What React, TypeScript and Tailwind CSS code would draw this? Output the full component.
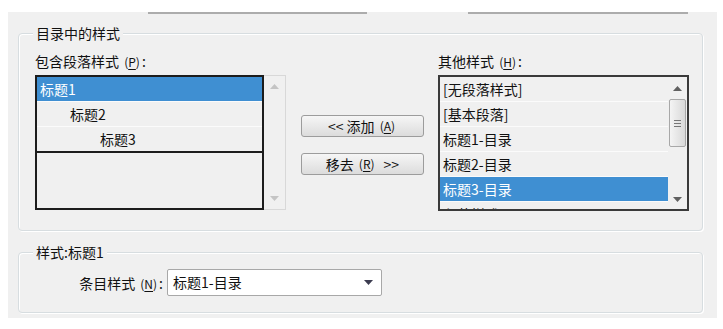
import React from "react";

const FONT = { fontFamily: '"Noto Sans CJK SC", "Noto Sans", sans-serif' };

function Key({ k }: { k: string }) {
  return (
    <span className="text-[12px] mx-[2px]">
      (<span className="underline underline-offset-2">{k}</span>)
    </span>
  );
}

function Arrow({ dir, color }: { dir: "up" | "down"; color: string }) {
  return (
    <svg width="9" height="5" viewBox="0 0 9 5">
      {dir === "up" ? (
        <path d="M4.5 0 L9 5 L0 5 Z" fill={color} />
      ) : (
        <path d="M0 0 L9 0 L4.5 5 Z" fill={color} />
      )}
    </svg>
  );
}

function Row({
  children,
  selected,
  indent = 0,
}: {
  children: React.ReactNode;
  selected?: boolean;
  indent?: number;
}) {
  return (
    <div
      className={`h-[25px] shrink-0 flex items-center border-b border-[#fbfbfb] text-[14px] leading-none whitespace-nowrap ${
        selected ? "bg-[#3f8fd2] text-white" : "text-[#111]"
      }`}
      style={{ paddingLeft: 3 + indent }}
    >
      {children}
    </div>
  );
}

function Legend({ children }: { children: React.ReactNode }) {
  return (
    <div className="absolute -top-[11px] left-[14px] bg-[#f0f0f0] px-[3px] text-[14px] leading-[20px] text-[#111]">
      {children}
    </div>
  );
}

function PushButton({ children }: { children: React.ReactNode }) {
  return (
    <button className="w-[123px] h-[22px] rounded-[3px] border border-[#9c9c9c] bg-gradient-to-b from-[#f6f6f6] to-[#dcdcdc] text-[14px] leading-none text-[#111] flex items-center justify-center gap-[3px]">
      {children}
    </button>
  );
}

export default function App() {
  return (
    <div className="w-[723px] h-[329px] bg-white overflow-hidden" style={FONT}>
      <div className="h-[12px]" />
      <div className="ml-[8px] w-[709px] h-[306px] bg-[#f0f0f0] flex flex-col">
        {/* top separator lines */}
        <div className="h-[2px] flex">
          <div className="ml-[140px] w-[219px] bg-[#acacac]" />
          <div className="ml-[101px] w-[220px] bg-[#acacac]" />
        </div>

        {/* group 1 */}
        <div className="relative mt-[19px] ml-[10px] w-[685px] h-[198px] rounded-[4px] border border-[#d7dde0] shadow-[inset_1px_1px_0_#fff,1px_1px_0_#fff]">
          <Legend>目录中的样式</Legend>
          <div className="flex pl-[16px] pt-[20px]">
            {/* left column */}
            <div className="flex flex-col">
              <div className="h-[21px] text-[14px] leading-[14px] text-[#111] whitespace-nowrap">
                包含段落样式 <Key k="P" />:
              </div>
              <div className="flex h-[135px]">
                <div className="w-[229px] border-2 border-[#1c1c1c] flex flex-col">
                  <Row selected>标题1</Row>
                  <Row indent={30}>标题2</Row>
                  <Row indent={60}>标题3</Row>
                  <div className="border-b-2 border-[#1c1c1c] -mt-px" />
                </div>
                <div className="w-[22px] border border-[#d8d8d8] border-l-0 flex flex-col items-center justify-between py-[8px]">
                  <Arrow dir="up" color="#c4c4c4" />
                  <Arrow dir="down" color="#c4c4c4" />
                </div>
              </div>
            </div>

            {/* buttons */}
            <div className="ml-[15px] pt-[61px] flex flex-col gap-[16px]">
              <PushButton>
                <span>&lt;&lt; 添加</span>
                <Key k="A" />
              </PushButton>
              <PushButton>
                <span>移去</span>
                <Key k="R" />
                <span className="ml-1">&gt;&gt;</span>
              </PushButton>
            </div>

            {/* right column */}
            <div className="ml-[14px] flex flex-col">
              <div className="h-[21px] text-[14px] leading-[14px] text-[#111] whitespace-nowrap">
                其他样式 <Key k="H" />:
              </div>
              <div className="w-[251px] h-[136px] border-2 border-[#3a3a3a] flex overflow-hidden">
                <div className="flex-1 flex flex-col overflow-hidden">
                  <Row>[无段落样式]</Row>
                  <Row>[基本段落]</Row>
                  <Row>标题1-目录</Row>
                  <Row>标题2-目录</Row>
                  <Row selected>标题3-目录</Row>
                  <Row>段落样式:</Row>
                </div>
                <div className="w-[19px] flex flex-col items-center">
                  <div className="h-[22px] flex items-center">
                    <Arrow dir="up" color="#606060" />
                  </div>
                  <div className="w-[17px] h-[48px] rounded-[2px] border border-[#a8a8a8] bg-gradient-to-r from-[#f4f4f4] to-[#d9d9d9] flex flex-col items-center justify-center gap-[2px]">
                    <div className="w-[7px] h-px bg-[#777]" />
                    <div className="w-[7px] h-px bg-[#777]" />
                    <div className="w-[7px] h-px bg-[#777]" />
                  </div>
                  <div className="flex-1" />
                  <div className="h-[20px] flex items-center">
                    <Arrow dir="down" color="#606060" />
                  </div>
                </div>
              </div>
            </div>
          </div>
        </div>

        {/* group 2 */}
        <div className="relative mt-[21px] ml-[10px] w-[685px] h-[61px] rounded-[4px] border border-[#d7dde0] shadow-[inset_1px_1px_0_#fff,1px_1px_0_#fff]">
          <Legend>样式:标题1</Legend>
          <div className="flex items-center pt-[16px]">
            <div className="w-[148px] pr-[4px] text-right text-[14px] leading-none text-[#111] whitespace-nowrap">
              条目样式 <Key k="N" />:
            </div>
            <div className="w-[215px] h-[27px] bg-white border border-[#a8a8a8] rounded-[2px] flex items-center justify-between pl-[5px] pr-[8px] text-[14px] text-[#111]">
              <span>标题1-目录</span>
              <svg width="9" height="5" viewBox="0 0 9 5">
                <path d="M0 0 L9 0 L4.5 5 Z" fill="#3c3c50" />
              </svg>
            </div>
          </div>
        </div>
      </div>
    </div>
  );
}
